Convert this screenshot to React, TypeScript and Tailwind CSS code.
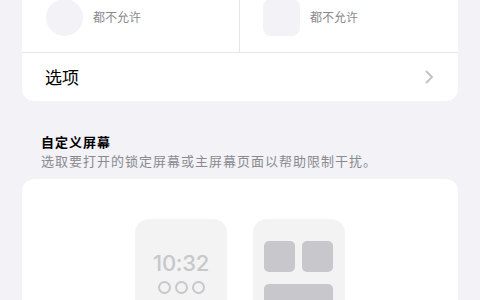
import React from "react";

const cjk = { fontFamily: '"Noto Sans CJK SC", "Noto Sans", sans-serif' };

const Chevron = () => (
  <svg width="9" height="14" viewBox="0 0 9 14" fill="none">
    <path d="M1.5 1.5 L7 7 L1.5 12.5" stroke="#c4c4c7" strokeWidth="2" strokeLinecap="round" strokeLinejoin="round" />
  </svg>
);

const LockPhone = () => (
  <div className="w-[92px] h-[120px] rounded-[14px] bg-[#f3f3f3] flex flex-col items-center pt-[31px]">
    <span
      className="text-[22px] leading-[26px] font-medium text-[#c7c7cc] tracking-[-0.3px]"
      style={{ fontFamily: "Inter, sans-serif" }}
    >
      10:32
    </span>
    <div className="flex gap-[4px] mt-[5px]">
      <span className="w-[13px] h-[13px] rounded-full border-2 border-[#c7c7cc]" />
      <span className="w-[13px] h-[13px] rounded-full border-2 border-[#c7c7cc]" />
      <span className="w-[13px] h-[13px] rounded-full border-2 border-[#c7c7cc]" />
    </div>
  </div>
);

const HomePhone = () => (
  <div className="w-[92px] h-[120px] rounded-[14px] bg-[#f3f3f3] pt-[22px] pl-[11px] pr-[12px]">
    <div className="grid grid-cols-2 gap-x-[7px] gap-y-[12px]">
      <div className="h-[31px] rounded-[5px] bg-[#c7c7cc]" />
      <div className="h-[31px] rounded-[5px] bg-[#c7c7cc]" />
      <div className="col-span-2 h-[31px] rounded-[5px] bg-[#c7c7cc]" />
    </div>
  </div>
);

export default function App() {
  return (
    <div className="w-[480px] h-[300px] overflow-hidden bg-[#f2f2f7]" style={cjk}>
      {/* top card, scrolled partly off the top */}
      <div className="mx-[22px] -mt-[19px] bg-white rounded-[12px]">
        <div className="grid grid-cols-2 h-[72px] border-b border-[#e5e5ea]">
          <div className="flex items-center pl-[24px] pt-[1px] border-r border-[#e5e5ea]">
            <div className="w-[37px] h-[37px] rounded-full bg-[#f2f2f7]" />
            <span className="ml-[10px] text-[12px] text-[#8a8a8e]">都不允许</span>
          </div>
          <div className="flex items-center pl-[23px] pt-[1px]">
            <div className="w-[37px] h-[37px] rounded-[8px] bg-[#f2f2f7]" />
            <span className="ml-[10px] text-[12px] text-[#8a8a8e]">都不允许</span>
          </div>
        </div>
        <div className="h-[48px] flex items-center justify-between pl-[23px] pr-[24px]">
          <span className="text-[17px] text-black">选项</span>
          <Chevron />
        </div>
      </div>

      <div className="mx-[41px] mt-[31px]">
        <h2 className="text-[13px] leading-[19px] tracking-[1px] font-bold text-black">自定义屏幕</h2>
        <p className="text-[13px] leading-[19px] tracking-[1px] text-[#8a8a8e]">
          选取要打开的锁定屏幕或主屏幕页面以帮助限制干扰。
        </p>
      </div>

      <div className="mx-[22px] mt-[9px] bg-white rounded-[12px] h-[160px] pt-[40px] flex justify-center gap-[26px]">
        <LockPhone />
        <HomePhone />
      </div>
    </div>
  );
}
